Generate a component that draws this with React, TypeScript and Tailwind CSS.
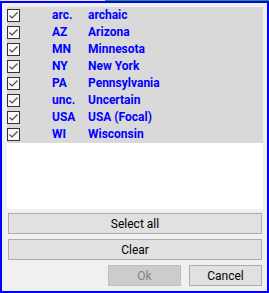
const ITEMS: [string, string][] = [
  ["arc.", "archaic"],
  ["AZ", "Arizona"],
  ["MN", "Minnesota"],
  ["NY", "New York"],
  ["PA", "Pennsylvania"],
  ["unc.", "Uncertain"],
  ["USA", "USA (Focal)"],
  ["WI", "Wisconsin"],
];

function Check() {
  return (
    <div className="w-[13px] h-[13px] border border-[#333333] bg-[#f7f7f7] shrink-0">
      <svg width="11" height="11" viewBox="0 0 11 11" className="block">
        <path d="M1.5 5.5 L4 8 L9.5 2.5" fill="none" stroke="#4a4a4a" strokeWidth="1.2" />
      </svg>
    </div>
  );
}

export default function App() {
  return (
    <div
      className="w-[269px] h-[293px] flex flex-col bg-[#f0f0f0]"
      style={{ fontFamily: "Roboto, 'Liberation Sans', sans-serif" }}
    >
      <div className="flex h-[1px] shrink-0">
        <div className="w-[105px] bg-[#e6e6e6]" />
        <div className="flex-1 bg-[#1f9e3a]" />
      </div>
      <div className="flex-1 flex flex-col border-2 border-[#0000ff] pl-[5px] pr-[4px] pt-[4px] pb-[5px]">
        <div className="h-[202px] bg-white flex flex-col">
          {ITEMS.map(([code, name]) => (
            <div key={code} className="h-[17px] bg-[#d9d9d9] flex pt-[2px]">
              <Check />
              <div className="flex text-[12px] leading-[13px] font-bold text-[#0000ff]">
                <span className="ml-[32px] w-[36px]">{code}</span>
                <span>{name}</span>
              </div>
            </div>
          ))}
        </div>
        <div className="mt-[4px] flex flex-col gap-[5px] px-[1px] text-[12px] text-black">
          <button className="h-[21px] bg-[#e1e1e1] border border-[#adadad] leading-none">Select all</button>
          <button className="h-[21px] bg-[#e1e1e1] border border-[#adadad] leading-none">Clear</button>
          <div className="flex justify-end gap-[8px]">
            <button className="h-[21px] w-[73px] bg-[#cccccc] border border-[#bfbfbf] text-[#838383] leading-none">Ok</button>
            <button className="h-[21px] w-[73px] bg-[#e1e1e1] border border-[#adadad] leading-none">Cancel</button>
          </div>
        </div>
      </div>
    </div>
  );
}
